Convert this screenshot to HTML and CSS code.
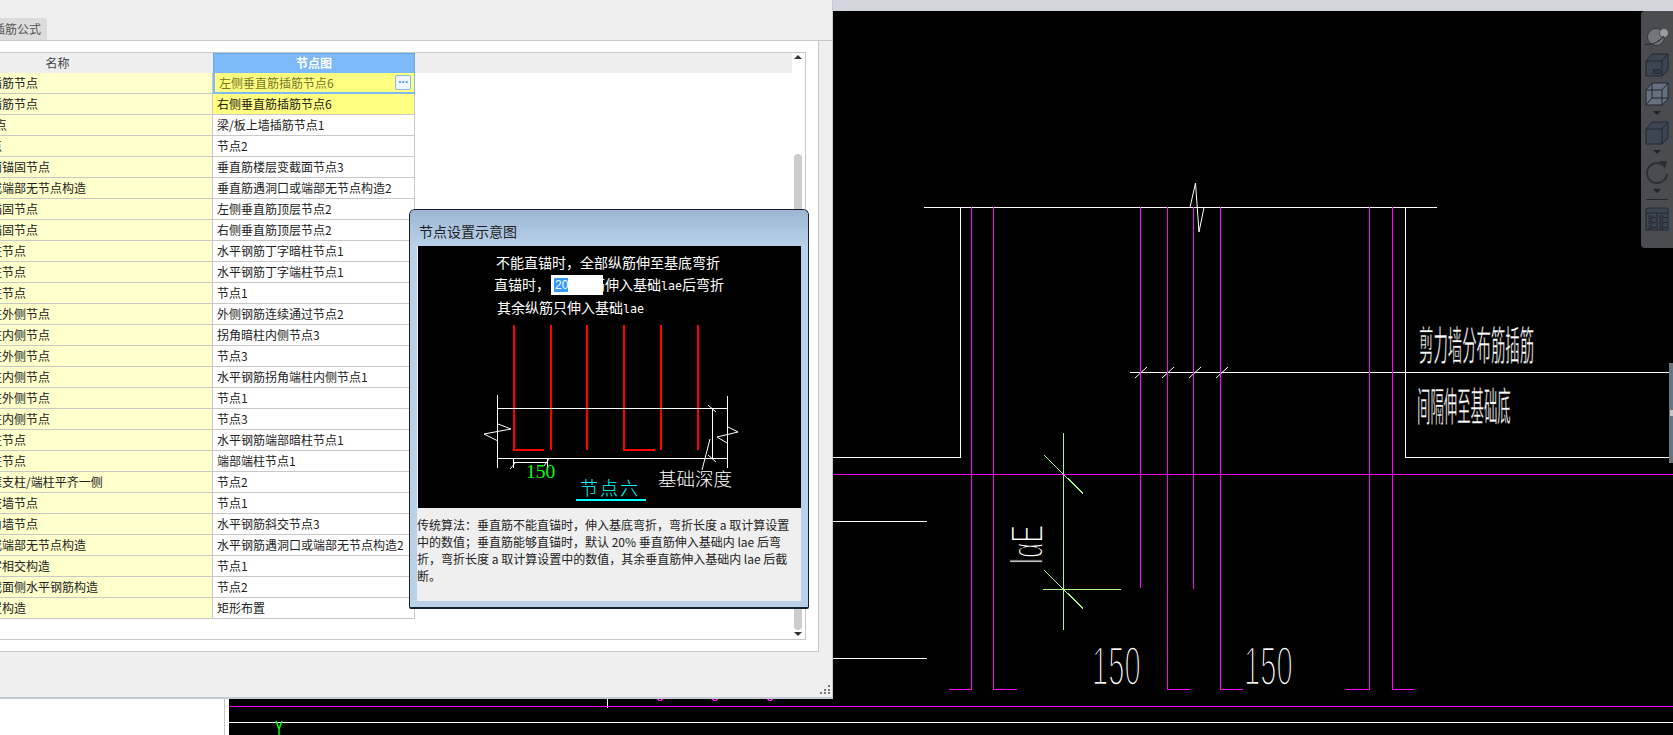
FILE: index.html
```html
<!DOCTYPE html>
<html lang="zh-CN">
<head>
<meta charset="utf-8">
<title>节点设置</title>
<link rel="stylesheet" href="styles.css">
</head>
<body>
<div class="stage">
  <div class="topstrip"></div>
  <div class="work">
    <div class="leftpane"></div>
    <div class="cad">
      <svg class="cad-svg" width="1444" height="724" viewBox="229 11 1444 724">
        <g class="ln-white">
          <path d="M924 207.5H1437M960.5 207.5V457.5H833M1405.5 207.5V457.5H1673M1130 372.5H1669M833 521.5H927M833 658.5H927M229 722.5H1673M607.5 698V708"/>
          <path class="thin" d="M1190 207.5L1195.5 183L1199 232L1204 207.5"/>
          <path class="thin" d="M1135 378L1147 367M1162 378L1174 367M1189 378L1201 367M1216 378L1228 367"/>
        </g>
        <g class="ln-magenta">
          <path d="M971.5 207V689.5H949M993.5 207V689.5H1017M1140.5 207V588M1167.5 207V689.5H1190M1193.5 207V589M1220.5 207V689.5H1243M1369.5 207V689.5H1346M1392.5 207V689.5H1414M833 474.5H1673M229 706.5H1673"/>
          <path d="M657 698q3 6 6 0M712 698q3 6 6 0M767 698q3 6 6 0"/>
        </g>
        <g class="ln-green">
          <path d="M1063.5 433V630M1043 589.5H1121M1044 455L1083 493.5M1044 570L1083 608.5"/>
        </g>
        <path class="ln-y" d="M276 721L279 729L282 721M279 729V735"/>
        <text class="cad-cjk" transform="translate(1419 360) scale(.36 1)">剪力墙分布筋插筋</text>
        <text class="cad-cjk" transform="translate(1417 421) scale(.335 1)">间隔伸至基础底</text>
        <text class="cad-num" transform="translate(1092 685) scale(.53 1)">150</text>
        <text class="cad-num" transform="translate(1244 685) scale(.53 1)">150</text>
        <text class="cad-num cad-le" transform="translate(1043 564) rotate(-90) scale(.58 1)">lαE</text>
      </svg>
    </div>
  </div>

  <section class="window">
    <div class="tabs"><span class="tab"><span class="tab-label">插筋公式</span></span></div>
    <div class="panel">
      <div class="frame">
        <div class="table">
          <div class="thead">
            <div class="th">名称</div>
            <div class="th th-active">节点图</div>
          </div>
          <div class="row row-edit"><div class="name">剪力墙左侧垂直插筋节点</div><div class="val val-edit"><span class="val-text">左侧垂直筋插筋节点6</span><span class="more">···</span></div></div>
          <div class="row row-sel"><div class="name">剪力墙右侧垂直插筋节点</div><div class="val">右侧垂直筋插筋节点6</div></div>
          <div class="row"><div class="name">剪力墙梁/板上节点</div><div class="val">梁/板上墙插筋节点1</div></div>
          <div class="row"><div class="name">剪力墙基础内节点</div><div class="val">节点2</div></div>
          <div class="row"><div class="name">垂直筋楼层变截面锚固节点</div><div class="val">垂直筋楼层变截面节点3</div></div>
          <div class="row"><div class="name">墙垂直筋遇洞口或端部无节点构造</div><div class="val">垂直筋遇洞口或端部无节点构造2</div></div>
          <div class="row"><div class="name">左侧垂直筋顶层锚固节点</div><div class="val">左侧垂直筋顶层节点2</div></div>
          <div class="row"><div class="name">右侧垂直筋顶层锚固节点</div><div class="val">右侧垂直筋顶层节点2</div></div>
          <div class="row"><div class="name">水平钢筋丁字暗柱节点</div><div class="val">水平钢筋丁字暗柱节点1</div></div>
          <div class="row"><div class="name">水平钢筋丁字端柱节点</div><div class="val">水平钢筋丁字端柱节点1</div></div>
          <div class="row"><div class="name">水平钢筋十字暗柱节点</div><div class="val">节点1</div></div>
          <div class="row"><div class="name">水平钢筋转角暗柱外侧节点</div><div class="val">外侧钢筋连续通过节点2</div></div>
          <div class="row"><div class="name">水平钢筋转角暗柱内侧节点</div><div class="val">拐角暗柱内侧节点3</div></div>
          <div class="row"><div class="name">水平钢筋转角端柱外侧节点</div><div class="val">节点3</div></div>
          <div class="row"><div class="name">水平钢筋转角端柱内侧节点</div><div class="val">水平钢筋拐角端柱内侧节点1</div></div>
          <div class="row"><div class="name">水平钢筋斜交暗柱外侧节点</div><div class="val">节点1</div></div>
          <div class="row"><div class="name">水平钢筋斜交暗柱内侧节点</div><div class="val">节点3</div></div>
          <div class="row"><div class="name">水平钢筋端部暗柱节点</div><div class="val">水平钢筋端部暗柱节点1</div></div>
          <div class="row"><div class="name">水平钢筋端部端柱节点</div><div class="val">端部端柱节点1</div></div>
          <div class="row"><div class="name">水平钢筋墙身与框支柱/端柱平齐一侧</div><div class="val">节点2</div></div>
          <div class="row"><div class="name">水平钢筋丁字相交墙节点</div><div class="val">节点1</div></div>
          <div class="row"><div class="name">水平钢筋斜交转角墙节点</div><div class="val">水平钢筋斜交节点3</div></div>
          <div class="row"><div class="name">水平钢筋遇洞口或端部无节点构造</div><div class="val">水平钢筋遇洞口或端部无节点构造2</div></div>
          <div class="row"><div class="name">墙身水平钢筋十字相交构造</div><div class="val">节点1</div></div>
          <div class="row"><div class="name">墙身竖向钢筋变截面侧水平钢筋构造</div><div class="val">节点2</div></div>
          <div class="row"><div class="name">墙身拉结钢筋布置构造</div><div class="val">矩形布置</div></div>
        </div>
        <div class="vscroll">
          <span class="arrow-up"></span>
          <span class="thumb"></span>
          <span class="arrow-down"></span>
        </div>
      </div>
    </div>
    <div class="statusbar">
      <svg class="grip" width="10" height="10" viewBox="0 0 10 10"><path d="M8 0h2v2H8zM4 4h2v2H4zM8 4h2v2H8zM0 7h2v2H0zM4 7h2v2H4zM8 7h2v2H8z"/></svg>
    </div>
  </section>

  <section class="popup">
    <h2 class="popup-title">节点设置示意图</h2>
    <div class="popup-body">
      <svg class="diagram" width="383" height="262" viewBox="418 246 383 262">
        <g class="d-text">
          <text x="496" y="268">不能直锚时，全部纵筋伸至基底弯折</text>
          <text x="494" y="290">直锚时，</text>
          <text x="591" y="290">筋伸入基础<tspan class="d-mono">lae</tspan>后弯折</text>
          <text x="497" y="313">其余纵筋只伸入基础<tspan class="d-mono">lae</tspan></text>
        </g>
        <rect class="d-input" x="551" y="275" width="52" height="20"/>
        <rect class="d-selected" x="554" y="278" width="14" height="14"/>
        <text class="d-inputtext" x="555" y="289">20</text>
        <path class="d-red" d="M514 325V450H544M551 325V450M587 325V450M624 325V450H655M661 325V450M698 325V450"/>
        <path class="d-white" d="M497.5 395V468M727.5 396V468M497 408.5H727M497 458.5H727M712.5 408V458M513.5 458V468M513 462.5H547M547.5 458V468"/>
        <path class="d-white d-thin" d="M498 424L511 429L484 434L498 441M728 427L738 432L717 437L727 443M708 405L716 412M708 455L716 462M710 439L702 470M510 469L516 462M544 466L549 459"/>
        <text class="d-green" x="526" y="478">150</text>
        <text class="d-cyan" x="580" y="495" textLength="58">节点六</text>
        <path class="d-underline" d="M576 500H646"/>
        <text class="d-depth" x="658" y="486">基础深度</text>
      </svg>
      <p class="popup-desc">传统算法：垂直筋不能直锚时，伸入基底弯折，弯折长度 a 取计算设置中的数值；垂直筋能够直锚时，默认 20% 垂直筋伸入基础内 lae 后弯折，弯折长度 a 取计算设置中的数值，其余垂直筋伸入基础内 lae 后截断。</p>
    </div>
  </section>

  <aside class="toolbar">
    <svg class="ti ti-sphere" width="26" height="19" viewBox="0 0 26 19"><circle cx="12" cy="10" r="8.500" fill="#75767b" stroke="#33363c"/><circle cx="20" cy="6" r="4.500" fill="#9a9b9f" stroke="#4a4c52"/><path d="M1 17C3 18 13 18 20 9" fill="none" stroke="#2b2d33" stroke-width="1.200"/></svg>
    <svg class="ti ti-3d" width="24" height="24" viewBox="0 0 24 24"><path class="c-face" d="M1 8L7 1H23V17L17 23H1Z"/><path class="c-edge" d="M1 8H17V23M17 8L23 1"/><text class="ti-label" x="7" y="21">3D</text></svg>
    <svg class="ti ti-wire" width="24" height="24" viewBox="0 0 24 24"><path class="c-light" d="M1 8L7 1H23V17L17 23H1Z"/><path class="c-edge" d="M1 8H17V23M17 8L23 1M7 1V16H23M7 16L1 23"/></svg>
    <span class="caret"></span>
    <svg class="ti ti-cube" width="24" height="24" viewBox="0 0 24 24"><path class="c-face" d="M1 8L7 1H23V17L17 23H1Z"/><path class="c-edge" d="M1 8H17V23M17 8L23 1"/></svg>
    <span class="caret"></span>
    <svg class="ti ti-rot" width="24" height="24" viewBox="0 0 24 24"><path d="M18 5A10 10 0 1 0 22 14" fill="none" stroke="#2a2e37" stroke-width="2"/><path d="M14 1L22 1L20 9Z" fill="#2a2e37"/></svg>
    <span class="caret"></span>
    <span class="ti-sep"></span>
    <svg class="ti ti-list" width="24" height="24" viewBox="0 0 24 24"><path class="c-face" d="M1 3Q1 1 3 1H21Q23 1 23 3V23H1Z"/><path class="c-edge" d="M1 6H23M12 6V23M4 9h3v3H4zM4 14h3v3H4zM4 19h3v3H4zM15 9h3v3h-3zM15 14h3v3h-3zM15 19h3v3h-3zM8 10.500h3M8 15.500h3M8 20.500h3M19 10.500h3M19 15.500h3M19 20.500h3"/></svg>
  </aside>
  <div class="edge-handle"><span class="edge-knob"></span></div>
</div>
</body>
</html>
```

FILE: styles.css
```css
* { box-sizing: border-box; }
html, body { margin: 0; padding: 0; background: #fff; }
body { font-family: "Noto Sans CJK SC", "Noto Sans", sans-serif; font-size: 12px; color: #222; }

.stage { position: relative; width: 1673px; height: 735px; overflow: hidden; display: flex; flex-direction: column; }
.topstrip { height: 11px; background: #d2d6dc; flex: none; }
.work { flex: 1; display: flex; min-height: 0; }
.leftpane { width: 225px; background: #fff; border-right: 1px solid #c4c6ca; flex: none; }
.cad { flex: 1; margin-left: 4px; background: #000; }
.cad-svg { display: block; }

.ln-white path { fill: none; stroke: #fff; stroke-width: 1; shape-rendering: crispEdges; }
.ln-white path.thin { shape-rendering: auto; }
.ln-magenta path { fill: none; stroke: #f0f; stroke-width: 1; shape-rendering: crispEdges; }
.ln-green path { fill: none; stroke: #a8f58c; stroke-width: 1; shape-rendering: crispEdges; }
.ln-y { fill: none; stroke: #0f0; stroke-width: 1.5; }
.cad-cjk { font-family: "Noto Sans CJK SC", sans-serif; font-size: 40px; font-weight: 400; fill: #fff; stroke: #000; stroke-width: .6px; paint-order: fill stroke; }
.cad-num { font-family: "Liberation Sans", sans-serif; font-size: 55px; fill: #fff; stroke: #000; stroke-width: 2.4px; paint-order: fill stroke; }
.cad-le { font-size: 46px; stroke-width: 1.8px; }

/* main window */
.window { position: absolute; left: 0; top: 0; width: 833px; height: 699px; background: #efefef; border-right: 1px solid #c4cad6; border-bottom: 2px solid #c4cad6; display: flex; flex-direction: column; }
.tabs { height: 41px; padding-top: 18px; border-bottom: 1px solid #c8c8c8; flex: none; overflow: hidden; }
.tab { display: block; width: 47px; height: 22px; background: #dcdcdc; border-radius: 0 3px 0 0; line-height: 22px; color: #555; font-size: 12px; overflow: hidden; position: relative; }
.tab-label { display: block; margin-left: -7px; white-space: nowrap; }
.panel { width: 819px; height: 611px; background: #fff; border-right: 1px solid #c8c8c8; border-bottom: 1px solid #c8c8c8; padding: 11px 12px 11px 0; flex: none; }
.frame { height: 588px; border-top: 1px solid #c8c8c8; border-right: 1px solid #c8c8c8; border-bottom: 1px solid #c8c8c8; display: flex; overflow: hidden; }
.table { width: 793px; flex: none; overflow: hidden; }
.thead { display: grid; grid-template-columns: 311px 202px; height: 20px; width: 890px; margin-left: -98px; background: #eee; }
.th { text-align: center; line-height: 20px; color: #444; border-bottom: 1px solid #eee; }
.th-active { background: #7db8f8; color: #fff; font-weight: 700; border: 1px solid #6aa8ee; line-height: 18px; }
.row { display: grid; grid-template-columns: 311px 202px; height: 21px; width: 513px; margin-left: -98px; }
.name, .val { line-height: 20px; white-space: nowrap; border-bottom: 1px solid #c8c8c8; border-right: 1px solid #c8c8c8; overflow: hidden; }
.name { background: #ffffcc; padding-left: 4px; }
.val { padding-left: 4px; background: #fff; }
.row-sel .val { background: #ffff80; }
.row-edit .val { background: #ffff80; }
.val-edit { display: flex; align-items: center; justify-content: space-between; border: 2px solid #7db8f8; border-top: 0; border-right-width: 1px; padding: 0 3px 0 4px; color: #76762a; line-height: 19px; }
.more { width: 16px; height: 15px; background: #eef5ff; border: 1px solid #8ab8f0; border-radius: 2px; color: #5b9be6; font-size: 13px; line-height: 11px; text-align: center; font-weight: 700; font-family: "Liberation Sans", sans-serif; letter-spacing: -1px; }

.vscroll { flex: 1; display: flex; flex-direction: column; align-items: center; padding: 2px 3px 0 1px; }
.arrow-up, .arrow-down { width: 0; height: 0; border-left: 4px solid transparent; border-right: 4px solid transparent; flex: none; }
.arrow-up { border-bottom: 4px solid #333; margin-bottom: 95px; }
.arrow-down { border-top: 4px solid #333; margin-top: 2px; }
.thumb { width: 8px; height: 476px; background: #ccc; border-radius: 4px; flex: none; }

.statusbar { flex: 1; display: flex; justify-content: flex-end; align-items: flex-end; padding: 0 2px 2px 0; }
.grip { fill: #777; display: block; }

/* popup */
.popup { position: absolute; left: 409px; top: 209px; width: 400px; height: 400px; border: 1px solid #1b1f24; border-bottom: 2px solid #10252c; border-radius: 6px 6px 2px 2px; background: #b9d1ea; display: flex; flex-direction: column; }
.popup-title { margin: 0; height: 36px; padding: 0 0 0 9px; background: linear-gradient(#9bb5d3, #b9d1ea); border-radius: 5px 5px 0 0; font-size: 14px; font-weight: 400; line-height: 42px; color: #222; flex: none; }
.popup-body { margin: 0 7px 6px 7px; flex: 1; background: #efefef; display: flex; flex-direction: column; }
.diagram { display: block; background: #000; margin-left: 1px; flex: none; }
.d-text text { font-family: "Noto Sans CJK SC", sans-serif; font-size: 14px; fill: #fff; }
.d-mono { font-family: "DejaVu Sans Mono", monospace; font-size: 11.67px; }
.d-input { fill: #fff; }
.d-selected { fill: #3399ff; }
.d-inputtext { font-family: "Liberation Sans", sans-serif; font-size: 12px; fill: #fff; }
.d-red { fill: none; stroke: #f00; stroke-width: 2; shape-rendering: crispEdges; }
.d-white { fill: none; stroke: #fff; stroke-width: 1; shape-rendering: crispEdges; }
.d-thin { shape-rendering: auto; }
.d-green { font-family: "Liberation Serif", serif; font-size: 19.5px; fill: #0f0; }
.d-cyan { font-family: "Noto Sans CJK SC", sans-serif; font-size: 18px; fill: #0ff; font-weight: 300; }
.d-underline { fill: none; stroke: #0ff; stroke-width: 2; shape-rendering: crispEdges; }
.d-depth { font-family: "Noto Sans CJK SC", sans-serif; font-size: 18.5px; fill: #fff; font-weight: 300; }
.popup-desc { margin: 8px 0 0; line-height: 17px; font-size: 12px; color: #222; }

/* toolbar */
.toolbar { position: absolute; left: 1641px; top: 11px; width: 32px; height: 237px; background: #4b4c50; border-radius: 4px 0 0 4px; display: flex; flex-direction: column; align-items: center; padding-top: 16px; }
.ti { display: block; flex: none; }
.ti-3d { margin-top: 7px; }
.ti-wire { margin-top: 5px; }
.ti-cube { margin-top: 6px; }
.ti-rot { margin-top: 6px; }
.caret { width: 0; height: 0; border-left: 4px solid transparent; border-right: 4px solid transparent; border-top: 4px solid #222; margin-top: 5px; flex: none; }
.ti-sep { width: 22px; height: 1px; background: #26282c; margin-top: 6px; flex: none; }
.ti-list { margin-top: 7px; }
.c-face { fill: #3e4552; stroke: #22262e; stroke-width: 1; }
.c-light { fill: #66717f; stroke: #22262e; stroke-width: 1; }
.c-edge { fill: none; stroke: #22262e; stroke-width: 1; }
.ti-label { font-family: "Liberation Sans", sans-serif; font-size: 7px; font-weight: 700; fill: #22262e; }

.edge-handle { position: absolute; left: 1669px; top: 363px; width: 4px; height: 100px; background: #6a747c; display: flex; align-items: center; }
.edge-knob { width: 3px; height: 6px; margin-left: 1px; background: #c4c8cc; }
```
